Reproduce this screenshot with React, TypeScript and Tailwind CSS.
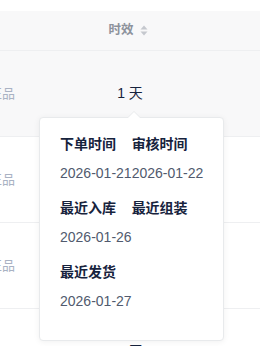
import React from "react";

const ROWS = ["正品", "正品", "正品", "正品"];

const TIMES = [
  { label: "下单时间", value: "2026-01-21" },
  { label: "审核时间", value: "2026-01-22" },
  { label: "最近入库", value: "2026-01-26" },
  { label: "最近组装", value: "" },
  { label: "最近发货", value: "2026-01-27" },
];

function SortIcon() {
  return (
    <svg width="8" height="11" viewBox="0 0 8 11" className="ml-[6px]">
      <path d="M4 0.5 L7.5 4.5 L0.5 4.5 Z" fill="#c5c8ce" />
      <path d="M4 10.5 L7.5 6.5 L0.5 6.5 Z" fill="#c5c8ce" />
    </svg>
  );
}

export default function App() {
  return (
    <div
      className="relative w-[260px] h-[346px] overflow-hidden bg-white"
      style={{ fontFamily: '"Liberation Sans", "Noto Sans CJK SC", sans-serif' }}
    >
      <div className="pt-[11px] -ml-[40px] w-[300px]">
        {/* header */}
        <div className="flex h-[40px] bg-[#f8f8f9] border-b border-[#eeeff1]">
          <div className="w-[80px]" />
          <div className="w-[180px] flex items-center justify-center text-[12.5px] font-bold text-[#8d929c]">
            <span className="-ml-[4px]">时效</span>
            <SortIcon />
          </div>
        </div>
        {ROWS.map((r, i) => (
          <div
            key={i}
            className={
              "flex h-[86px] border-b border-[#eeeff1] " +
              (i === 0 ? "bg-[#f8f8f9]" : "bg-white")
            }
          >
            <div className="w-[80px] flex items-center justify-end pr-[25px] text-[13px] text-[#a9b2c3]">
              {r}
            </div>
            <div className="w-[180px] flex items-center justify-center text-[14px] text-[#17233d]">
              1 天
            </div>
          </div>
        ))}
      </div>

      {/* popover */}
      <div className="absolute left-[39px] top-[117px] w-[185px] h-[224px] bg-white border border-[#e8eaec] rounded-[4px] shadow-[0_1px_6px_rgba(0,0,0,0.06)]">
        <div className="absolute left-[87px] -top-[7px] w-0 h-0 border-x-[7px] border-x-transparent border-b-[7px] border-b-[#e8eaec]" />
        <div className="absolute left-[88px] -top-[6px] w-0 h-0 border-x-[6px] border-x-transparent border-b-[6px] border-b-white" />
        <div className="flex flex-wrap pl-[20px] pr-[16px] pt-[16px]">
          {TIMES.map((t, i) => (
            <div key={i} className="flex flex-col mb-[15px]">
              <div className="text-[14px] leading-[20px] font-bold text-[#17233d]">{t.label}</div>
              <div className="mt-[9px] text-[14px] leading-[20px] text-[#515a6e] min-h-[20px]">{t.value}</div>
            </div>
          ))}
        </div>
      </div>
    </div>
  );
}
